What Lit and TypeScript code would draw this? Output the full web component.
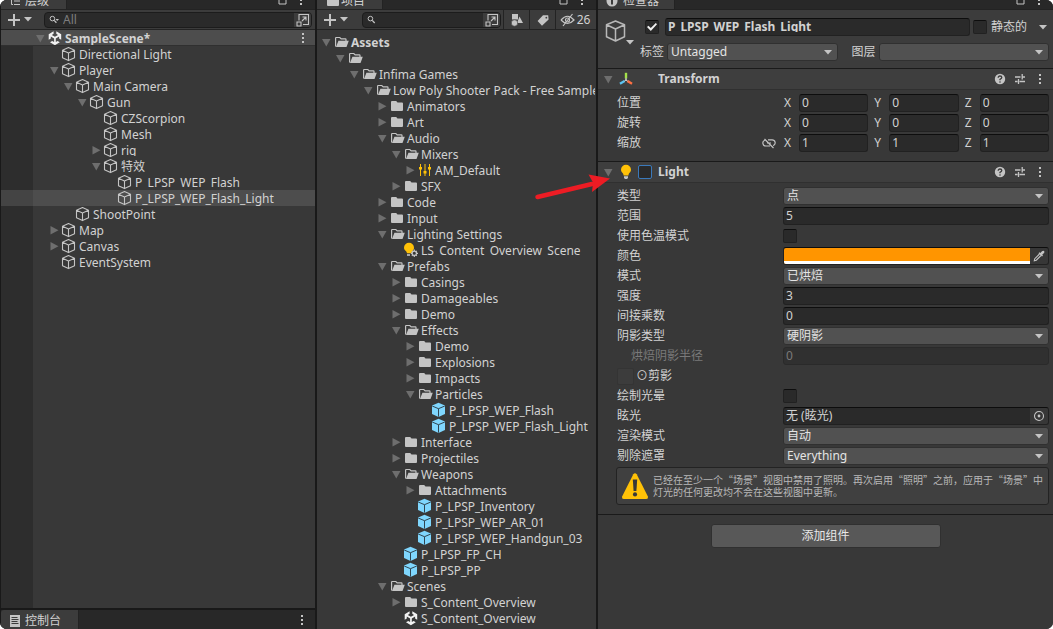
import { LitElement, html, css, nothing, TemplateResult } from "lit";
import { customElement, property } from "lit/decorators.js";
import { styleMap } from "lit/directives/style-map.js";
import { classMap } from "lit/directives/class-map.js";

const cube = html`<svg width="16" height="16" viewBox="0 0 16 16" fill="none" stroke="#c4c4c4" stroke-width="1.1" stroke-linejoin="round"><path d="M7.5 1.6 13.500 4.300v7.400l-6 2.900-6-2.900V4.300z M1.500 4.300l6 2.800 6-2.800 M7.500 7.100v7.300"/></svg>`;
const prefab = html`<svg width="16" height="16" viewBox="0 0 16 16"><path fill="#7fd6fd" d="M7.5.8 14 3.6v8.3l-6.500 3.100L1 11.900V3.600z"/><path fill="none" stroke="#2f4450" stroke-width="1" d="M1.200 4l6.300 2.700L13.800 4M7.500 6.700v8"/></svg>`;
const folder = html`<svg width="16" height="16" viewBox="0 0 16 16"><path fill="#c4c4c4" d="M2 4a1 1 0 0 1 1-1h4.200l1.300 1.600H13a1 1 0 0 1 1 1V12a1 1 0 0 1-1 1H3a1 1 0 0 1-1-1z"/></svg>`;
const folderOpen = html`<svg width="16" height="16" viewBox="0 0 16 16"><path fill="none" stroke="#c4c4c4" stroke-width="1.200" d="M3 12.500 2.600 12V4.100q0-.6.6-.6h3.600l1.400 1.400h4.200q.6 0 .6.6V7"/><path fill="#c4c4c4" d="M5.400 6.800H15.800L13.500 13H3z"/></svg>`;
const unity = html`<svg width="16" height="16" viewBox="0 0 16 16"><path fill="#f2f2f2" d="M6.600 1.300v2.500L4.800 4.900 7.900 6.700 11 4.900 9.300 3.800V1.300L14.200 4.300v5.500l-2.100-1.200V6.500L8.800 8.400v3.700l1.800-1 2.200 1.200L7.900 15.200 3 12.300l2.200-1.200 1.900 1V8.400L3.800 6.500v2.100L1.700 9.800V4.300z"/></svg>`;
const mixer = html`<svg width="16" height="16" viewBox="0 0 16 16" fill="#ffc107"><path d="M3 2h1v12H3zM7.500 2h1v12h-1zM12 2h1v12h-1z"/><path d="M2 5h3v2.500H2zM6.500 9h3v2.500h-3zM11 5h3v2.500h-3z"/></svg>`;
const lightSettings = html`<svg width="16" height="16" viewBox="0 0 16 16"><path fill="#ffc107" d="M6 .7a5 5 0 0 1 5 5c0 1.700-.9 2.600-1.700 3.500-.5.600-.7 1.300-.9 2H4c-.2-.7-.4-1.400-.9-2C2 8.300 1 7.400 1 5.700a5 5 0 0 1 5-5z"/><path fill="#c4c4c4" d="M4 12.200h3v1.600H4z"/><circle cx="11.300" cy="11.300" r="2.200" fill="#383838" stroke="#c4c4c4" stroke-width="1.300"/><path stroke="#c4c4c4" stroke-width="1.200" d="M11.300 7.600v1.400M11.300 13.600V15M7.900 11.300h1.200M13.500 11.300H15M8.900 8.900l.8.800M13 13l.8.800M13.800 8.900l-.9.800M9.700 13l-.8.800"/></svg>`;
const bulb = html`<svg width="16" height="16" viewBox="0 0 16 16"><path fill="#ffc107" d="M8 .8a5 5 0 0 1 5 5c0 2-1.300 2.700-2 3.800-.4.600-.5 1.300-.6 2H5.600c-.1-.7-.2-1.400-.6-2C4.300 8.500 3 7.800 3 5.800a5 5 0 0 1 5-5z"/><path fill="#c4c4c4" d="M6 12.300h4v1.200L9.200 15H6.800L6 13.500z"/></svg>`;
const axes = html`<svg width="16" height="16" viewBox="0 0 16 16" stroke-width="2.400" stroke-linecap="square"><path stroke="#a5e24a" d="M8 3v3.300"/><path stroke="#5cc4f2" d="M5.600 10.600 3 12.200"/><path stroke="#ff7043" d="M10.400 10.600 13 12.200"/><path stroke="#ddd" stroke-width="1" d="M8 7.500v1.500M8 9 6.800 9.800M8 9l1.200.8"/></svg>`;
const dots = html`<svg width="4" height="14" viewBox="0 0 4 14" fill="#c4c4c4"><path d="M1 2h2v2H1zM1 6h2v2H1zM1 10h2v2H1z"/></svg>`;
const maximize = html`<svg width="9" height="9" viewBox="0 0 9 9" fill="none" stroke="#c4c4c4"><path d="M1 1h7v7H1z"/></svg>`;
const plus = html`<svg width="14" height="14" viewBox="0 0 14 14" stroke="#c4c4c4" stroke-width="2"><path d="M7 1v12M1 7h12"/></svg>`;
const caret = html`<svg class="caret" width="8" height="5" viewBox="0 0 8 5" fill="#c4c4c4"><path d="M0 0h8L4 4.500z"/></svg>`;
const lens = html`<svg width="10" height="10" viewBox="0 0 10 10" fill="none" stroke="#c4c4c4"><circle cx="3.400" cy="3.600" r="2.300"/><path stroke-width="1.300" d="M5.200 5.400 7.700 8"/></svg>`;
const lensMenu = html`<svg width="10" height="10" viewBox="0 0 10 10" fill="none" stroke="#c4c4c4"><circle cx="3.400" cy="3.600" r="2.300"/><path stroke-width="1.300" d="M5.200 5.400 7.400 7.700"/><path fill="#c4c4c4" stroke="none" d="M6.500 4h3.500L8.200 6z"/></svg>`;
const picker = html`<svg width="14" height="14" viewBox="0 0 14 14" fill="none" stroke="#c4c4c4" stroke-width="1.100"><path d="M3 7.500V1.500h9.500v10H7M1 9h4v4H1zM6 8l4-4M6.500 4H10v3.500"/></svg>`;
const shapes = html`<svg width="14" height="14" viewBox="0 0 14 14" fill="#c4c4c4"><path d="M2 1h6v5.500H2zM9.500 3.500 13 10H7z"/><circle cx="4.500" cy="10" r="3.200" stroke="#3c3c3c" stroke-width=".6"/></svg>`;
const tagIcon = html`<svg width="14" height="14" viewBox="0 0 14 14"><path fill="#c4c4c4" fill-rule="evenodd" d="M7 2.200h5.200l.4 4.200L6 12.800 1.600 8zM10.300 3.800a.9.900 0 1 0 .1 1.800.9.900 0 0 0-.1-1.800z"/></svg>`;
const eyeOff = html`<svg width="15" height="14" viewBox="0 0 15 14" fill="none" stroke="#c4c4c4" stroke-width="1.200"><path d="M1 7q6.500-7.500 13 0-6.500 7-13 0M12.500 1 3 13"/><circle cx="7.500" cy="7" r="2"/></svg>`;
const help = html`<svg width="12" height="12" viewBox="0 0 12 12"><circle cx="6" cy="6" r="5.200" fill="#c4c4c4"/><path fill="none" stroke="#3c3c3c" stroke-width="1.300" d="M4.200 4.700q0-1.700 1.800-1.700t1.800 1.500Q7.800 5.500 6 6.300V7.300"/><circle cx="6" cy="9" r=".8" fill="#3c3c3c"/></svg>`;
const sliders = html`<svg width="12" height="12" viewBox="0 0 12 12" fill="none" stroke="#c4c4c4" stroke-width="1.300"><path d="M1 4h5.500M8.500 4H11M8.200 1v5.500M1 8.500h2.500M5.500 8.500H11M4.500 6v5"/></svg>`;
const unlink = html`<svg width="14" height="12" viewBox="0 0 14 12" fill="none" stroke="#c4c4c4" stroke-width="1.200"><path d="M2.500 2 11.500 11M6 2.800h4a3 3 0 0 1 1.200 5.800M8 9H4a3 3 0 0 1-1.200-5.800M5 6h4"/></svg>`;
const dropper = html`<svg width="12" height="12" viewBox="0 0 12 12"><path fill="none" stroke="#c4c4c4" stroke-width="1.100" d="M6.500 4 1.800 8.700 1.300 10.700 3.300 10.200 8 5.500"/><path fill="#c4c4c4" d="M5.500 3.200 6.500 2.200 7.300 3 9 1.200Q10.200.4 11 1.100q.8.900 0 1.900L9.200 4.800l.8.800-1 1z"/></svg>`;
const target = html`<svg width="12" height="12" viewBox="0 0 12 12"><circle cx="6" cy="6" r="4.500" fill="none" stroke="#c4c4c4" stroke-width="1.100"/><circle cx="6" cy="6" r="1.400" fill="#c4c4c4"/></svg>`;
const listIcon = html`<svg width="12" height="12" viewBox="0 0 12 12"><path fill="#c4c4c4" d="M1 0h10v12H1z"/><path stroke="#3c3c3c" d="M2.500 2.500h6M2.500 4.500h7M2.500 6.500h6M2.500 8.500h7"/></svg>`;
const hierarchyIcon = html`<svg width="12" height="12" viewBox="0 0 12 12" stroke="#c4c4c4" fill="none"><path d="M1 2.500h10M2.500 3v6.500H4M5 6h6M5 9.500h6"/></svg>`;
const info = html`<svg width="12" height="12" viewBox="0 0 12 12"><circle cx="6" cy="6" r="5.500" fill="#c4c4c4"/><path fill="#3c3c3c" d="M5 2h2v2H5zM5 5h2v4.500H5z"/></svg>`;
const warning = html`<svg width="28" height="28" viewBox="0 0 28 28"><path fill="#ffc107" d="M12.300 2.200Q14 .2 15.700 2.200L27 24.800Q27.300 27 25.300 27H2.700Q.7 27 1 24.800z"/><path fill="#383838" d="M11.800 7.500h4.400L15.400 19h-2.800z"/><circle cx="14" cy="22.400" r="2.100" fill="#383838"/></svg>`;

const icons: Record<string, TemplateResult> = { cube, prefab, folder, open: folderOpen, unity, mixer, light: lightSettings };

interface Node {
  label: string;
  depth: number;
  icon: string;
  fold?: "open" | "closed";
  kind?: "scene" | "root" | "selected" | "short";
}

const n = (depth: number, icon: string, label: string, fold?: Node["fold"], kind?: Node["kind"]): Node => ({ depth, icon, label, fold, kind });

const hierarchy: Node[] = [
  n(0, "unity", "SampleScene*", "open", "scene"),
  n(1, "cube", "Directional Light"),
  n(1, "cube", "Player", "open"),
  n(2, "cube", "Main Camera", "open"),
  n(3, "cube", "Gun", "open"),
  n(4, "cube", "CZScorpion"),
  n(4, "cube", "Mesh"),
  n(4, "cube", "rig", "closed", "short"),
  n(4, "cube", "特效", "open"),
  n(5, "cube", "P_LPSP_WEP_Flash", undefined, "short"),
  n(5, "cube", "P_LPSP_WEP_Flash_Light", undefined, "selected"),
  n(2, "cube", "ShootPoint"),
  n(1, "cube", "Map", "closed"),
  n(1, "cube", "Canvas", "closed"),
  n(1, "cube", "EventSystem"),
];

const assets: Node[] = [
  n(0, "open", "Assets", "open", "root"),
  n(1, "open", "", "open"),
  n(2, "open", "Infima Games", "open"),
  n(3, "open", "Low Poly Shooter Pack - Free Sample", "open"),
  n(4, "folder", "Animators", "closed"),
  n(4, "folder", "Art", "closed"),
  n(4, "open", "Audio", "open"),
  n(5, "open", "Mixers", "open"),
  n(6, "mixer", "AM_Default", "closed"),
  n(5, "folder", "SFX", "closed"),
  n(4, "folder", "Code", "closed"),
  n(4, "folder", "Input", "closed"),
  n(4, "open", "Lighting Settings", "open"),
  n(5, "light", "LS_Content_Overview_Scene", undefined, "short"),
  n(4, "open", "Prefabs", "open"),
  n(5, "folder", "Casings", "closed"),
  n(5, "folder", "Damageables", "closed"),
  n(5, "folder", "Demo", "closed"),
  n(5, "open", "Effects", "open"),
  n(6, "folder", "Demo", "closed"),
  n(6, "folder", "Explosions", "closed"),
  n(6, "folder", "Impacts", "closed"),
  n(6, "open", "Particles", "open"),
  n(7, "prefab", "P_LPSP_WEP_Flash"),
  n(7, "prefab", "P_LPSP_WEP_Flash_Light"),
  n(5, "folder", "Interface", "closed"),
  n(5, "folder", "Projectiles", "closed"),
  n(5, "open", "Weapons", "open"),
  n(6, "folder", "Attachments", "closed"),
  n(6, "prefab", "P_LPSP_Inventory"),
  n(6, "prefab", "P_LPSP_WEP_AR_01"),
  n(6, "prefab", "P_LPSP_WEP_Handgun_03"),
  n(5, "prefab", "P_LPSP_FP_CH"),
  n(5, "prefab", "P_LPSP_PP"),
  n(4, "open", "Scenes", "open"),
  n(5, "folder", "S_Content_Overview", "closed"),
  n(5, "unity", "S_Content_Overview"),
];

const shared = css`
  * { box-sizing: border-box; }
  svg { display: block; flex: none; }
  button, input, select { font: inherit; color: inherit; margin: 0; padding: 0; border: 0; border-radius: 0; background: none; outline: none; appearance: none; }
  button { display: flex; align-items: center; justify-content: center; }
  .tabbar { height: 9px; flex: none; display: flex; align-items: flex-end; justify-content: space-between; overflow: hidden; background: #282828; }
  .tab { flex: none; height: 20px; display: flex; align-items: center; gap: 4px; padding: 4px 17px 0 8px; background: #3c3c3c; border-right: 1px solid #232323; line-height: 16px; }
  .tabtools { display: flex; align-items: center; gap: 12px; padding-right: 12px; height: 18px; }
  .toolbar { flex: none; height: 21px; display: flex; align-items: center; background: #3c3c3c; border-top: 1px solid #232323; border-bottom: 1px solid #232323; }
  .add { gap: 3px; width: 25px; margin-left: 6px; }
  .search { flex: 1; min-width: 0; height: 16px; display: flex; align-items: center; background: #2a2a2a; border: 1px solid #1c1c1c; border-radius: 4px; padding-left: 4px; }
  .search input { flex: 1; min-width: 0; height: 14px; padding-left: 4px; }
  .search input::placeholder { color: #7d7d7d; opacity: 1; }
  .search .pick { width: 17px; height: 14px; background: #3c3c3c; border-radius: 0 3px 3px 0; }
`;

@customElement("asset-tree")
class AssetTree extends LitElement {
  @property({ attribute: false }) nodes: Node[] = [];
  @property() label = "";
  static styles = [shared, css`
    :host { display: block; }
    ul { list-style: none; margin: 0; padding: 0; }
    li { height: 16px; display: flex; align-items: flex-start; white-space: nowrap; overflow: hidden; }
    li::before { content: ""; flex: none; width: var(--inset, 4px); }
    .fold { width: 12px; height: 16px; flex: none; justify-content: flex-start; padding-left: 1px; }
    .label { padding-left: 2px; line-height: 18px; }
    .short .label { clip-path: inset(0 0 4px); }
    .scene { background: #4d4d4d; border-bottom: 1px solid #303030; font-weight: 700; }
    .scene .more { margin-left: auto; padding: 1px 10px 0 0; }
    .root { font-weight: 700; }
    .selected { background: rgba(255, 255, 255, 0.11); }
  `];
  render() {
    return html`<ul aria-label=${this.label}>
      ${this.nodes.map((node) => html`
        <li class=${classMap({ [node.kind ?? "plain"]: true })} style=${styleMap({ paddingLeft: `${node.depth * 14}px` })}>
          ${node.fold
            ? html`<button class="fold" aria-label="折叠"><svg width="9" height="9" viewBox="0 0 9 9" fill="#6e6e6e"><path d=${node.fold === "open" ? "M0 1h8.500L4.300 8.500z" : "M.5 0v8.500L8.500 4.300z"}/></svg></button>`
            : html`<span class="fold"></span>`}
          ${icons[node.icon]}
          <span class="label">${node.label}</span>
          ${node.kind === "scene" ? html`<button class="more" aria-label="菜单">${dots}</button>` : nothing}
        </li>`)}
    </ul>`;
  }
}

@customElement("hierarchy-panel")
class HierarchyPanel extends LitElement {
  static styles = [shared, css`
    :host { display: flex; flex-direction: column; min-width: 0; min-height: 0; border-left: 1px solid #191919; }
    .tree { --inset: 47px; flex: 1; min-height: 0; overflow: hidden; background: linear-gradient(to right, #2d2d2d 32px, #383838 32px); }
    asset-tree { --inset: 34px; }
    .console { flex: none; display: flex; align-items: center; justify-content: space-between; height: 21px; padding-right: 11px; background: #282828; border-top: 2px solid #191919; }
    .console .tab { height: 19px; padding-top: 2px; border-radius: 3px 0 0 0; }
    .search { margin: 0 3px 0 12px; }
  `];
  render() {
    return html`
      <div class="tabbar"><div class="tab">${hierarchyIcon}<span>层级</span></div><div class="tabtools">${maximize}${dots}</div></div>
      <div class="toolbar">
        <button class="add" aria-label="添加">${plus}${caret}</button>
        <div class="search">${lensMenu}<input aria-label="搜索层级" placeholder="All" /><button class="pick" aria-label="选择">${picker}</button></div>
      </div>
      <div class="tree"><asset-tree .nodes=${hierarchy} label="层级"></asset-tree></div>
      <div class="console"><div class="tab">${listIcon}<span>控制台</span></div>${dots}</div>`;
  }
}

@customElement("project-panel")
class ProjectPanel extends LitElement {
  static styles = [shared, css`
    :host { display: flex; flex-direction: column; min-width: 0; min-height: 0; background: #383838; }
    .tree { flex: 1; min-height: 0; overflow: hidden; padding-top: 4px; margin-right: 1px; }
    .tab { gap: 0; }
    .search { margin: 0 2px 0 14px; }
    .filter { height: 19px; width: 26px; border-left: 1px solid #232323; }
    .hidden { width: 41px; gap: 2px; padding-right: 2px; }
  `];
  render() {
    return html`
      <div class="tabbar"><div class="tab">${folder}<span>项目</span></div><div class="tabtools">${maximize}${dots}</div></div>
      <div class="toolbar">
        <button class="add" aria-label="创建">${plus}${caret}</button>
        <div class="search">${lens}<input aria-label="搜索项目" /><button class="pick" aria-label="选择">${picker}</button></div>
        <button class="filter" aria-label="按类型搜索">${shapes}</button>
        <button class="filter" aria-label="按标签搜索">${tagIcon}</button>
        <button class="filter hidden" aria-label="隐藏的包">${eyeOff}<span>26</span></button>
      </div>
      <div class="tree"><asset-tree .nodes=${assets} label="项目"></asset-tree></div>`;
  }
}

@customElement("inspector-panel")
class InspectorPanel extends LitElement {
  static styles = [shared, css`
    :host { display: flex; flex-direction: column; min-width: 0; min-height: 0; background: #383838; }
    .tabbar .tab { gap: 5px; padding-right: 15px; }
    .object { display: grid; grid-template-columns: 36px minmax(0, 1fr); background: #3c3c3c; border-top: 1px solid #232323; padding: 8px 4px 8px 6px; height: 59px; }
    .big { display: flex; align-items: flex-end; height: 27px; }
    .lines { display: grid; gap: 7px; align-content: start; min-width: 0; }
    .line { display: flex; align-items: center; height: 18px; min-width: 0; }
    .line.top { padding: 0 2px 0 5px; }
    .line .name { flex: 1; margin: 0 3px 0 6px; }
    .line .static { padding: 0 12px 0 4px; }
    .line .sel { flex: 1; }
    .line .cap { padding-right: 3px; }
    .line .cap + .sel + .cap { padding-left: 14px; }
    .field { display: flex; min-width: 0; height: 18px; background: #2a2a2a; border: 1px solid #212121; border-top-color: #0d0d0d; border-radius: 3px; overflow: hidden; }
    .field input { flex: 1; width: 100%; min-width: 0; height: 16px; padding-left: 2px; line-height: 16px; }
    .field.name input { font-weight: 700; clip-path: inset(0 0 3px); }
    .field.off { background: #303030; border-color: #2a2a2a; color: #7a7a7a; }
    .field .end { width: 18px; flex: none; background: #373737; }
    .swatch { flex: 1; background: #ff9500; border-bottom: 3px solid #fff; }
    .sel { display: grid; min-width: 0; height: 18px; align-items: center; }
    .sel select { grid-area: 1 / 1; width: 100%; height: 18px; padding: 0 20px 0 3px; background: #515151; border: 1px solid #303030; border-radius: 3px; color: #e4e4e4; line-height: 16px; }
    .sel svg { grid-area: 1 / 1; justify-self: end; margin-right: 6px; pointer-events: none; }
    .check { width: 14px; height: 14px; flex: none; display: grid; place-items: center; background: #2a2a2a; border: 1px solid #212121; border-top-color: #0d0d0d; border-radius: 2px; }
    .check:checked::before { content: ""; width: 10px; height: 8px; background: #f0f0f0; clip-path: polygon(0 50%, 14% 34%, 38% 62%, 88% 0, 100% 16%, 38% 100%); }
    .check.focus { border-color: #3a79bb; }
    .check.faint { width: 17px; height: 17px; background: #3c3c3c; border-color: #343434; }
    .head { display: flex; align-items: center; height: 22px; background: #3e3e3e; border-top: 1px solid #1a1a1a; border-bottom: 1px solid #303030; padding: 0 3px 0 6px; }
    .head .fold { width: 14px; justify-content: flex-start; }
    .head h2 { font-size: 12px; line-height: 20px; margin: 0; font-weight: 700; flex: 1; }
    .head .slot { width: 24px; display: flex; padding-left: 4px; }
    .head .tools { display: flex; align-items: center; }
    .head .tools button { width: 20px; }
    .rows { display: grid; gap: 2px; padding: 4px 4px 9px 19px; }
    .rows.light { padding: 4px 4px 2px 19px; }
    .row { display: grid; grid-template-columns: 166px minmax(0, 1fr); align-items: center; height: 18px; line-height: 18px; }
    .row.sub > :first-child { padding-left: 14px; color: #7a7a7a; }
    .row .cap { display: flex; align-items: center; justify-content: space-between; padding-right: 7px; }
    .row .circle { display: flex; align-items: center; }
    .row .circle .check { margin-right: 2px; }
    .vec { display: grid; grid-template-columns: repeat(3, minmax(0, 1fr)); gap: 5px; }
    .axis { display: grid; grid-template-columns: 15px minmax(0, 1fr); padding-left: 1px; }
    .note { display: flex; align-items: center; gap: 4px; margin: 0 4px 9px 18px; padding: 3px 2px 3px 4px; min-height: 38px; background: #404040; border: 1px solid #232323; border-radius: 3px; font: 10px/12px "Noto Sans CJK SC", sans-serif; color: #b8b8b8; }
    .note p { margin: 0; }
    .foot { display: flex; justify-content: center; border-top: 1px solid #1a1a1a; padding-top: 9px; }
    .foot button { width: 230px; height: 24px; background: #585858; border: 1px solid #303030; border-radius: 3px; color: #e8e8e8; }
  `];
  private select(label: string, value: string) {
    return html`<div class="sel"><select id=${label}><option>${value}</option></select>${caret}</div>`;
  }
  private drop(label: string, value: string) {
    return html`<div class="row"><label for=${label}>${label}</label>${this.select(label, value)}</div>`;
  }
  private text(label: string, value: string, off = false) {
    return html`<div class=${classMap({ row: true, sub: off })}><label for=${label}>${label}</label>
      <div class=${classMap({ field: true, off })}><input id=${label} .value=${value} ?disabled=${off} /></div></div>`;
  }
  private toggle(label: string) {
    return html`<div class="row"><label for=${label}>${label}</label><input class="check" type="checkbox" id=${label} /></div>`;
  }
  private vector(label: string, value: string, linked = false) {
    return html`<div class="row"><div class="cap"><span>${label}</span>${linked ? unlink : nothing}</div>
      <div class="vec">${["X", "Y", "Z"].map((a) => html`<label class="axis">${a}<span class="field"><input aria-label="${label} ${a}" .value=${value} /></span></label>`)}</div></div>`;
  }
  private head(title: string, icon: TemplateResult, toggle: boolean) {
    return html`<div class="head">
      <button class="fold" aria-label="折叠"><svg width="9" height="9" viewBox="0 0 9 9" fill="#6e6e6e"><path d="M0 1h8.500L4.300 8.500z"/></svg></button>
      ${icon}<span class="slot">${toggle ? html`<input class="check focus" type="checkbox" aria-label=${title} />` : nothing}</span>
      <h2>${title}</h2>
      <div class="tools"><button aria-label="帮助">${help}</button><button aria-label="预设">${sliders}</button><button aria-label="菜单">${dots}</button></div>
    </div>`;
  }
  render() {
    return html`
      <div class="tabbar"><div class="tab">${info}<span>检查器</span></div><div class="tabtools">${maximize}${dots}</div></div>
      <div class="object">
        <div class="big"><svg width="22" height="26" viewBox="0 0 22 26" fill="none" stroke="#b8b8b8" stroke-width="1.500" stroke-linejoin="round"><path d="M11.500 2 20.500 5.800v12L11.500 22 2.500 17.800v-12zM2.500 5.800l9 4.200 9-4.200M11.500 10V22"/></svg>${caret}</div>
        <div class="lines">
          <div class="line top">
            <input class="check" type="checkbox" checked aria-label="启用" />
            <div class="field name"><input aria-label="名称" .value=${"P_LPSP_WEP_Flash_Light"} /></div>
            <input class="check" type="checkbox" id="static" /><label class="static" for="static">静态的</label>${caret}
          </div>
          <div class="line">
            <label class="cap" for="标签">标签</label>${this.select("标签", "Untagged")}
            <label class="cap" for="图层">图层</label>${this.select("图层", "")}
          </div>
        </div>
      </div>
      ${this.head("Transform", axes, false)}
      <div class="rows">${this.vector("位置", "0")}${this.vector("旋转", "0")}${this.vector("缩放", "1", true)}</div>
      ${this.head("Light", bulb, true)}
      <div class="rows light">
        ${this.drop("类型", "点")}
        ${this.text("范围", "5")}
        ${this.toggle("使用色温模式")}
        <div class="row"><span>颜色</span><div class="field"><button class="swatch" aria-label="颜色"></button><button class="end" aria-label="吸管">${dropper}</button></div></div>
        ${this.drop("模式", "已烘焙")}
        ${this.text("强度", "3")}
        ${this.text("间接乘数", "0")}
        ${this.drop("阴影类型", "硬阴影")}
        ${this.text("烘焙阴影半径", "0", true)}
        <div class="row"><label class="circle"><input class="check faint" type="checkbox" /><span>⊙剪影</span></label></div>
        ${this.toggle("绘制光晕")}
        <div class="row"><label for="flare">眩光</label><div class="field"><input id="flare" readonly .value=${"无 (眩光)"} /><button class="end" aria-label="选择眩光">${target}</button></div></div>
        ${this.drop("渲染模式", "自动")}
        ${this.drop("剔除遮罩", "Everything")}
      </div>
      <div class="note">${warning}<p lang="zh-CN">已经在至少一个“场景”视图中禁用了照明。再次启用“照明”之前，应用于“场景”中灯光的任何更改均不会在这些视图中更新。</p></div>
      <div class="foot"><button>添加组件</button></div>`;
  }
}

@customElement("app-root")
class AppRoot extends LitElement {
  static styles = css`
    :host { display: block; background: #fff; }
    .window { position: relative; height: 100vh; display: grid; grid-template-columns: minmax(0, 315fr) minmax(0, 279fr) minmax(0, 455fr); grid-template-rows: minmax(0, 1fr); gap: 2px; overflow: hidden; border-radius: 7px; background: #191919; color: #d2d2d2; font: 12px/16px "Noto Sans", "Noto Sans CJK SC", sans-serif; }
    .third { position: relative; display: grid; min-width: 0; }
    .pointer { position: absolute; left: -64px; top: 170px; pointer-events: none; }
  `;
  render() {
    return html`<main class="window">
      <hierarchy-panel></hierarchy-panel>
      <project-panel></project-panel>
      <div class="third">
        <inspector-panel></inspector-panel>
        <svg class="pointer" width="80" height="32" viewBox="0 0 80 32" aria-hidden="true"><path d="M3.500 27 58 14" stroke="#ed1c24" stroke-width="4.500" stroke-linecap="round"/><path fill="#ed1c24" d="M76 8.500 54.500 4.500 59 12.500 58 22z"/></svg>
      </div>
    </main>`;
  }
}
